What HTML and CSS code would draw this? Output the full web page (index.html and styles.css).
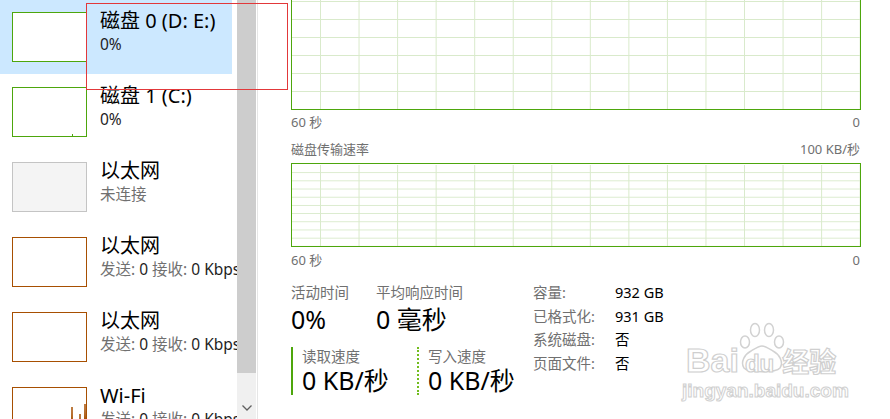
FILE: index.html
```html
<!DOCTYPE html>
<html lang="zh-CN">
<head>
<meta charset="utf-8">
<title>任务管理器 - 性能</title>
<link rel="stylesheet" href="styles.css">
</head>
<body>
<div class="app">
  <aside class="sidebar">
    <ul class="list">
      <li class="item selected">
        <div class="thumb thumb-disk"></div>
        <div class="info">
          <div class="title">磁盘 0 (D: E:)</div>
          <div class="sub">0%</div>
        </div>
      </li>
      <li class="item">
        <div class="thumb thumb-disk"><span class="tick"></span></div>
        <div class="info">
          <div class="title">磁盘 1 (C:)</div>
          <div class="sub">0%</div>
        </div>
      </li>
      <li class="item">
        <div class="thumb thumb-off"></div>
        <div class="info">
          <div class="title">以太网</div>
          <div class="sub muted">未连接</div>
        </div>
      </li>
      <li class="item">
        <div class="thumb thumb-net"></div>
        <div class="info">
          <div class="title">以太网</div>
          <div class="sub"><span class="muted">发送:</span> 0 <span class="muted">接收:</span> 0 Kbps</div>
        </div>
      </li>
      <li class="item">
        <div class="thumb thumb-net"></div>
        <div class="info">
          <div class="title">以太网</div>
          <div class="sub"><span class="muted">发送:</span> 0 <span class="muted">接收:</span> 0 Kbps</div>
        </div>
      </li>
      <li class="item">
        <div class="thumb thumb-net">
          <svg class="spark" viewBox="0 0 73 48" width="73" height="48"><polyline points="0,47.5 58,47.5 59,19 60,47.5 66,47.5 67,26 68,47.5 71,47.5 72,16 73,47.5" fill="none" stroke="#a74f01" stroke-width="1"/></svg>
        </div>
        <div class="info">
          <div class="title">Wi-Fi</div>
          <div class="sub"><span class="muted">发送:</span> 0 <span class="muted">接收:</span> 0 Kbps</div>
        </div>
      </li>
    </ul>
    <div class="scrollbar">
      <div class="scroll-thumb"></div>
      <div class="scroll-track">
        <svg class="chevron" viewBox="0 0 10 6" width="10" height="6"><polyline points="0.5,0.5 5,5 9.5,0.5" fill="none" stroke="#606060" stroke-width="1.3"/></svg>
      </div>
    </div>
    <div class="scroll-edge"></div>
  </aside>

  <main class="main">
    <div class="graph graph-top"></div>
    <div class="axis"><span>60 秒</span><span>0</span></div>
    <div class="caption"><span>磁盘传输速率</span><span>100 KB/秒</span></div>
    <div class="graph graph-rate"></div>
    <div class="axis axis-2"><span>60 秒</span><span>0</span></div>

    <section class="stats">
      <div class="stats-left">
        <div class="metrics">
          <div class="metric metric-first">
            <div class="label">活动时间</div>
            <div class="value">0%</div>
          </div>
          <div class="metric">
            <div class="label">平均响应时间</div>
            <div class="value">0 毫秒</div>
          </div>
        </div>
        <div class="speeds">
          <div class="speed read">
            <div class="label">读取速度</div>
            <div class="value">0 KB/秒</div>
          </div>
          <div class="speed write">
            <div class="label">写入速度</div>
            <div class="value">0 KB/秒</div>
          </div>
        </div>
      </div>
      <dl class="props">
        <dt>容量:</dt><dd>932 GB</dd>
        <dt>已格式化:</dt><dd>931 GB</dd>
        <dt>系统磁盘:</dt><dd>否</dd>
        <dt>页面文件:</dt><dd>否</dd>
      </dl>
    </section>
  </main>
</div>

<div class="annot"></div>

<div class="watermark" aria-hidden="true">
  <svg class="paw" viewBox="0 0 46 52" width="46" height="52">
    <g fill="#ffffff" stroke="#d2d2d2" stroke-width="1.5">
      <ellipse cx="6" cy="20" rx="4.5" ry="6"/>
      <ellipse cx="16" cy="8" rx="4.5" ry="6.5"/>
      <ellipse cx="30" cy="8" rx="4.5" ry="6.5"/>
      <ellipse cx="40" cy="20" rx="4.5" ry="6"/>
      <path d="M5 46 C1 40 6 32 12 29 C17 26 20 24 23 24 C26 24 29 26 34 29 C40 32 45 40 41 46 C37 51 9 51 5 46 Z"/>
    </g>
  </svg>
  <div class="wm-brand"><span class="wm-bai">Bai</span><span class="wm-du">du</span><span class="wm-cn">经验</span></div>
  <div class="wm-url">jingyan.baidu.com</div>
</div>
</body>
</html>
```
FILE: styles.css
```css
html, body {
  margin: 0;
  padding: 0;
}

body {
  width: 890px;
  height: 419px;
  overflow: hidden;
  position: relative;
  background: #ffffff;
  font-family: "Noto Sans", "Noto Sans CJK SC", sans-serif;
  color: #000000;
}

.app {
  display: flex;
  height: 419px;
}

/* ---------- sidebar ---------- */
.sidebar {
  display: flex;
  flex: none;
  width: 258px;
  height: 419px;
}

.list {
  list-style: none;
  margin: 0;
  padding: 0;
  width: 237px;
  height: 419px;
  overflow: hidden;
  flex: none;
}

.item {
  display: flex;
  gap: 13px;
  width: 232px;
  height: 75px;
  box-sizing: border-box;
  padding-left: 12px;
  white-space: nowrap;
}

.item.selected {
  background: #cce8ff;
  height: 74px;
  margin-bottom: 1px;
}

.thumb {
  position: relative;
  flex: none;
  width: 75px;
  height: 50px;
  box-sizing: border-box;
  margin-top: 12px;
  border: 1px solid;
  background: #ffffff;
}

.thumb-disk { border-color: #4da60c; }
.thumb-net { border-color: #a74f01; }
.thumb-off { border-color: #c4c4c4; background: #f4f4f4; }

.tick {
  position: absolute;
  left: 59px;
  bottom: 0;
  width: 1px;
  height: 2px;
  background: #4da60c;
}

.spark {
  position: absolute;
  left: 0;
  top: 0;
  display: block;
}

.info {
  padding-top: 10px;
}

.title {
  font-size: 20px;
  line-height: 21px;
  color: #000000;
}

.sub {
  margin-top: 3px;
  font-size: 15.5px;
  line-height: 20px;
  color: #1e1e1e;
}

.muted { color: #707070; }

.scrollbar {
  display: flex;
  flex-direction: column;
  flex: none;
  width: 19px;
  height: 419px;
}

.scroll-thumb {
  height: 373px;
  background: #cdcdcd;
}

.scroll-track {
  flex: 1;
  background: #f0f0f0;
  display: flex;
  justify-content: center;
  align-items: flex-end;
  padding-bottom: 8px;
}

.chevron { display: block; }

.scroll-edge {
  flex: none;
  width: 1px;
  margin-left: 1px;
  background: #e6e6e6;
}

/* ---------- main ---------- */
.main {
  flex: none;
  width: 570px;
  padding-left: 33px;
}

.graph {
  width: 570px;
  box-sizing: border-box;
  border: 1px solid #4da60c;
  background-color: #ffffff;
  background-image:
    linear-gradient(to right, #d9eacb 1px, transparent 1px),
    linear-gradient(to bottom, #d9eacb 1px, transparent 1px);
}

.graph-top {
  height: 110px;
  border-top: none;
  background-size: 38.56px 100%, 100% 18px;
  background-position: 28px 0, 0 1px;
}

.graph-rate {
  height: 84px;
  padding-top: 1px;
  background-origin: padding-box;
  background-clip: content-box;
  background-size: 38.56px 100%, 100% 8.2px;
  background-position: 28px 0, 0 0;
}

.axis,
.caption {
  display: flex;
  justify-content: space-between;
  width: 570px;
  box-sizing: border-box;
  padding-right: 1px;
  font-size: 13px;
  color: #707070;
}

.axis { line-height: 24px; }
.axis-2 { line-height: 26px; }

.caption {
  padding-top: 2px;
  line-height: 27px;
}

/* ---------- stats ---------- */
.stats {
  display: flex;
  padding-top: 9px;
}

.stats-left {
  flex: none;
  width: 242px;
}

.metrics { display: flex; }

.metric-first { width: 85px; }

.label {
  font-size: 14.5px;
  line-height: 21px;
  color: #707070;
  white-space: nowrap;
}

.value {
  font-size: 25px;
  line-height: 32px;
  color: #000000;
  white-space: nowrap;
}

.speeds {
  display: flex;
  margin-top: 12px;
}

.speed {
  padding-left: 9px;
  border-left: 2px solid #4da60c;
}

.speed.read {
  width: 126px;
  box-sizing: border-box;
}

.speed.write {
  border-left: 2px dotted #72bd1e;
}

.speed .label { line-height: 18px; }
.speed .value { line-height: 30px; }

.props {
  display: grid;
  grid-template-columns: 82px auto;
  align-content: start;
  margin: -1px 0 0 0;
  padding: 0;
  font-size: 14.5px;
  line-height: 23.6px;
}

.props dt { color: #707070; }
.props dd { margin: 0; color: #000000; }

/* ---------- overlays ---------- */
.annot {
  position: absolute;
  left: 86px;
  top: 3px;
  width: 202px;
  height: 87px;
  box-sizing: border-box;
  border: 1px solid #e2383a;
}

.watermark {
  position: absolute;
  left: 682px;
  top: 320px;
  width: 170px;
  height: 80px;
  pointer-events: none;
}

.paw {
  position: absolute;
  left: 57px;
  top: 2px;
}

.wm-brand {
  position: absolute;
  left: 4px;
  top: 22px;
  display: flex;
  align-items: baseline;
  white-space: nowrap;
  font-family: "Liberation Sans", "Noto Sans CJK SC", sans-serif;
  font-weight: bold;
  color: #ffffff;
  -webkit-text-stroke: 1.2px #cfcfcf;
}

.wm-bai {
  font-size: 34px;
  line-height: 36px;
}

.wm-du {
  font-size: 24px;
  line-height: 36px;
  margin-left: 6px;
}

.wm-cn {
  font-family: "Noto Sans CJK SC", sans-serif;
  font-size: 27px;
  line-height: 36px;
  margin-left: 8px;
}

.wm-url {
  position: absolute;
  left: 0;
  top: 60px;
  white-space: nowrap;
  font-family: "Liberation Sans", sans-serif;
  font-size: 19px;
  line-height: 22px;
  font-weight: bold;
  color: #ffffff;
  -webkit-text-stroke: 1px #d0d0d0;
}
```
